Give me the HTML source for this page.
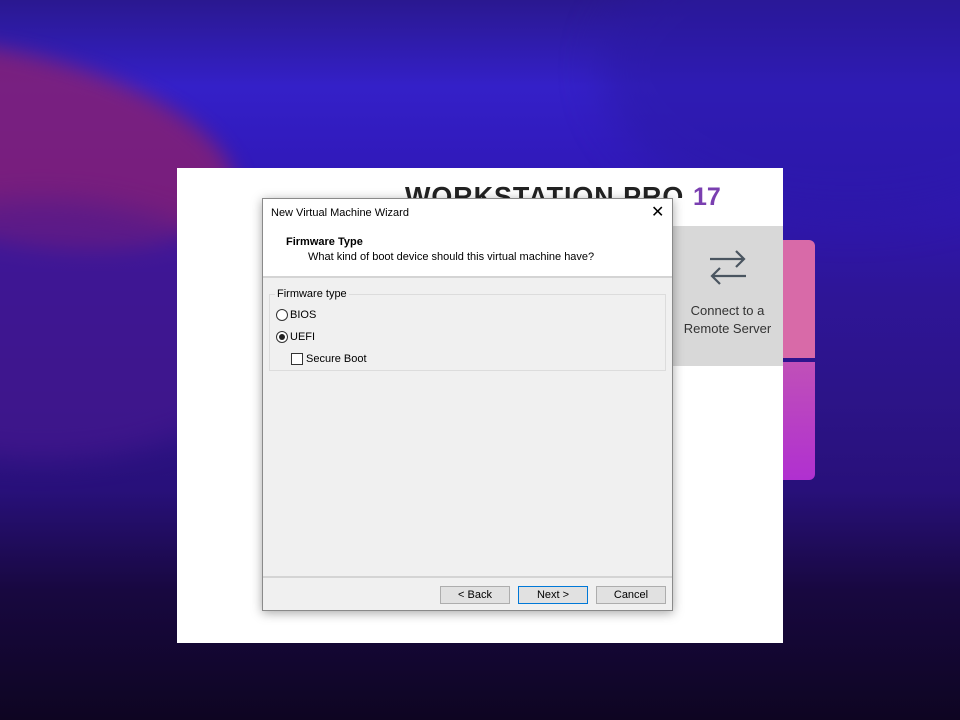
<!DOCTYPE html>
<html><head><meta charset="utf-8"><style>
*{margin:0;padding:0;box-sizing:border-box}
html,body{width:960px;height:720px;overflow:hidden}
body{position:relative;font-family:"Liberation Sans",sans-serif;
background:linear-gradient(180deg,#2a1890 0%,#3420c8 12%,#3018b8 25%,#2e1598 40%,#2c1488 55%,#28107a 68%,#180840 82%,#0e0522 100%)}
.blob{position:absolute;border-radius:50%}
.panel{position:absolute;left:177px;top:168px;width:606px;height:475px;background:#fff}
.logo{position:absolute;left:405px;top:178px;font-size:28px;letter-spacing:1px;color:#222;height:20px;overflow:hidden;line-height:38px;font-weight:bold;transform:scaleX(.96);transform-origin:left}
.seventeen{position:absolute;left:693px;top:183px;font-size:25px;color:#7a3fb0;font-weight:bold}
.grey{position:absolute;left:672px;top:226px;width:111px;height:140px;background:#d8d8d8}
.grey .t{position:absolute;top:76px;width:100%;text-align:center;font-size:13px;color:#333;line-height:18px}
.dlg{position:absolute;left:262px;top:198px;width:411px;height:413px;background:#f0f0f0;border:1px solid #8a8a8a;box-shadow:0 2px 10px rgba(0,0,0,.35);font-size:11px;color:#000}
.hdr{position:absolute;left:0;top:0;width:409px;height:79px;background:#fff;border-bottom:2px solid #d4d4d4}
.btn{position:absolute;top:387px;height:18px;width:70px;border:1px solid #adadad;background:#e1e1e1;text-align:center;line-height:16px;font-size:11px}
.radio{position:absolute;width:12px;height:12px;border:1px solid #333;border-radius:50%;background:#fff}
</style></head><body>
<div style="position:absolute;left:0;top:0;width:960px;height:720px;overflow:hidden">
<div class="blob" style="left:-240px;top:50px;width:480px;height:190px;background:#8a2070;opacity:.8;filter:blur(10px);transform:rotate(12deg)"></div>
<div class="blob" style="left:-200px;top:200px;width:480px;height:260px;background:#4a1890;opacity:.6;filter:blur(14px)"></div>
<div class="blob" style="left:600px;top:-80px;width:500px;height:300px;background:#2a18a0;opacity:.5;filter:blur(20px)"></div>
</div>
<div style="position:absolute;left:783px;top:240px;width:32px;height:118px;background:#d86aa8;border-radius:0 6px 0 0"></div>
<div style="position:absolute;left:783px;top:362px;width:32px;height:118px;background:linear-gradient(#c050b8,#b030d0);border-radius:0 0 6px 0"></div>
<div class="panel"></div>
<div class="logo">WORKSTATION PRO</div>
<div class="seventeen">17</div>
<div class="grey">
<svg style="position:absolute;left:36px;top:22px" width="40" height="40" viewBox="0 0 40 40" fill="none" stroke="#4a5560" stroke-width="2.2"><path d="M2 11H36M28 3L36 11L28 19"/><path d="M38 28H4M12 20L4 28L12 36"/></svg>
<div class="t">Connect to a<br>Remote Server</div>
</div>
<div class="dlg">
<div class="hdr">
<div style="position:absolute;left:8px;top:8px;font-size:11px">New Virtual Machine Wizard</div>
<div style="position:absolute;left:388px;top:3px;font-size:16px;font-weight:300">✕</div>
<div style="position:absolute;left:23px;top:37px;font-weight:bold">Firmware Type</div>
<div style="position:absolute;left:45px;top:52px">What kind of boot device should this virtual machine have?</div>
</div>
<div style="position:absolute;left:6px;top:95px;width:397px;height:77px;border:1px solid #dcdcdc"></div>
<div style="position:absolute;left:12px;top:89px;background:#f0f0f0;padding:0 2px">Firmware type</div>
<div class="radio" style="left:13px;top:110px"></div><div style="position:absolute;left:27px;top:110px">BIOS</div>
<div class="radio" style="left:13px;top:132px"><div style="position:absolute;left:2px;top:2px;width:6px;height:6px;border-radius:50%;background:#222"></div></div><div style="position:absolute;left:27px;top:132px">UEFI</div>
<div style="position:absolute;left:28px;top:154px;width:12px;height:12px;border:1px solid #333;background:#fff"></div><div style="position:absolute;left:43px;top:154px">Secure Boot</div>
<div style="position:absolute;left:0;top:377px;width:409px;height:2px;background:#d4d4d4"></div>
<div class="btn" style="left:177px">&lt; Back</div>
<div class="btn" style="left:255px;border:1px solid #0078d7">Next &gt;</div>
<div class="btn" style="left:333px">Cancel</div>
</div>
</body></html>
